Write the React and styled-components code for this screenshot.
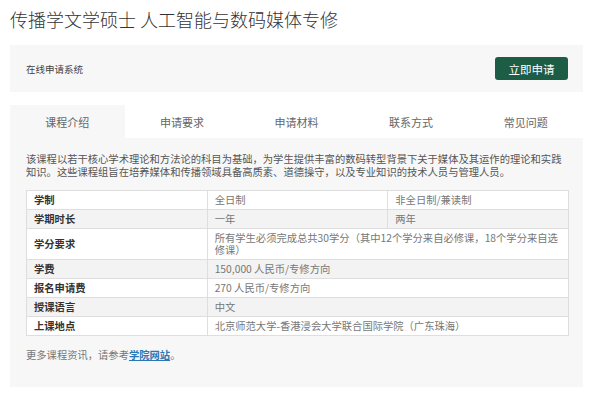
import React from "react";
import styled, { createGlobalStyle } from "styled-components";

const GlobalStyles = createGlobalStyle`
  body {
    margin: 0;
    background: #ffffff;
    font-family: "Noto Sans CJK SC", "Noto Sans", sans-serif;
    color: #555;
  }
`;

const Page = styled.div`
  width: 573px;
  padding: 7px 0 0 10px;
`;

const Title = styled.h1`
  margin: 0;
  font-size: 18px;
  line-height: 24px;
  font-weight: 300;
  color: #333;
`;

const ApplyBar = styled.div`
  margin-top: 14px;
  height: 47px;
  background: #f7f7f7;
  display: flex;
  align-items: center;
  justify-content: space-between;
  padding: 0 15px 0 16px;
`;

const BarLabel = styled.span`
  font-size: 9.5px;
  color: #444;
`;

const ApplyButton = styled.button`
  width: 73px;
  height: 23px;
  border: none;
  border-radius: 3px;
  background: #1d5c45;
  color: #fff;
  font-family: inherit;
  font-size: 11.5px;
  padding: 0;
  cursor: pointer;
`;

const Tabs = styled.div`
  margin-top: 13px;
  display: grid;
  grid-template-columns: repeat(5, 1fr);
  height: 33px;
`;

const Tab = styled.div`
  display: flex;
  align-items: center;
  justify-content: center;
  font-size: 11px;
  color: #666;
  background: ${(p) => (p.$active ? "#f7f7f7" : "transparent")};
`;

const Panel = styled.div`
  background: #f7f7f7;
  padding: 15px 14px 0 16px;
  height: 234px;
`;

const Intro = styled.p`
  margin: 0;
  font-size: 10.3px;
  line-height: 12.5px;
  color: #555;
`;

const InfoTable = styled.table`
  margin-top: 11.5px;
  width: 543px;
  table-layout: fixed;
  border-collapse: collapse;
  font-size: 10.3px;
  line-height: 12px;
`;

const Row = styled.tr`
  background: ${(p) => (p.$striped ? "#f3f3f3" : "#ffffff")};
`;

const Label = styled.td`
  border: 1px solid #dedede;
  padding: 3px 7px;
  font-weight: 700;
  color: #333;
`;

const Value = styled.td`
  border: 1px solid #dedede;
  padding: 3px 7px;
  color: #777;
`;

const Footer = styled.p`
  margin: 12px 0 0;
  font-size: 10.3px;
  line-height: 14px;
  color: #777;
`;

const Link = styled.a`
  color: #2a78b8;
  font-weight: 700;
  text-decoration: underline;
`;

const tabs = ["课程介绍", "申请要求", "申请材料", "联系方式", "常见问题"];

const rows = [
  { label: "学制", values: ["全日制", "非全日制/兼读制"] },
  { label: "学期时长", values: ["一年", "两年"] },
  {
    label: "学分要求",
    values: ["所有学生必须完成总共30学分（其中12个学分来自必修课，18个学分来自选修课）"],
  },
  { label: "学费", values: ["150,000 人民币/专修方向"] },
  { label: "报名申请费", values: ["270 人民币/专修方向"] },
  { label: "授课语言", values: ["中文"] },
  { label: "上课地点", values: ["北京师范大学-香港浸会大学联合国际学院（广东珠海）"] },
];

export default function App() {
  return (
    <Page>
      <GlobalStyles />
      <Title>传播学文学硕士 人工智能与数码媒体专修</Title>
      <ApplyBar>
        <BarLabel>在线申请系统</BarLabel>
        <ApplyButton>立即申请</ApplyButton>
      </ApplyBar>
      <Tabs>
        {tabs.map((t, i) => (
          <Tab key={t} $active={i === 0}>
            {t}
          </Tab>
        ))}
      </Tabs>
      <Panel>
        <Intro>
          该课程以若干核心学术理论和方法论的科目为基础，为学生提供丰富的数码转型背景下关于媒体及其运作的理论和实践知识。这些课程组旨在培养媒体和传播领域具备高质素、道德操守，以及专业知识的技术人员与管理人员。
        </Intro>
        <InfoTable>
          <colgroup>
            <col />
            <col />
            <col />
          </colgroup>
          <tbody>
            {rows.map((r, i) => (
              <Row key={r.label} $striped={i % 2 === 1}>
                <Label>{r.label}</Label>
                {r.values.length === 2 ? (
                  r.values.map((v) => <Value key={v}>{v}</Value>)
                ) : (
                  <Value colSpan={2}>{r.values[0]}</Value>
                )}
              </Row>
            ))}
          </tbody>
        </InfoTable>
        <Footer>
          更多课程资讯，请参考<Link href="#">学院网站</Link>。
        </Footer>
      </Panel>
    </Page>
  );
}
